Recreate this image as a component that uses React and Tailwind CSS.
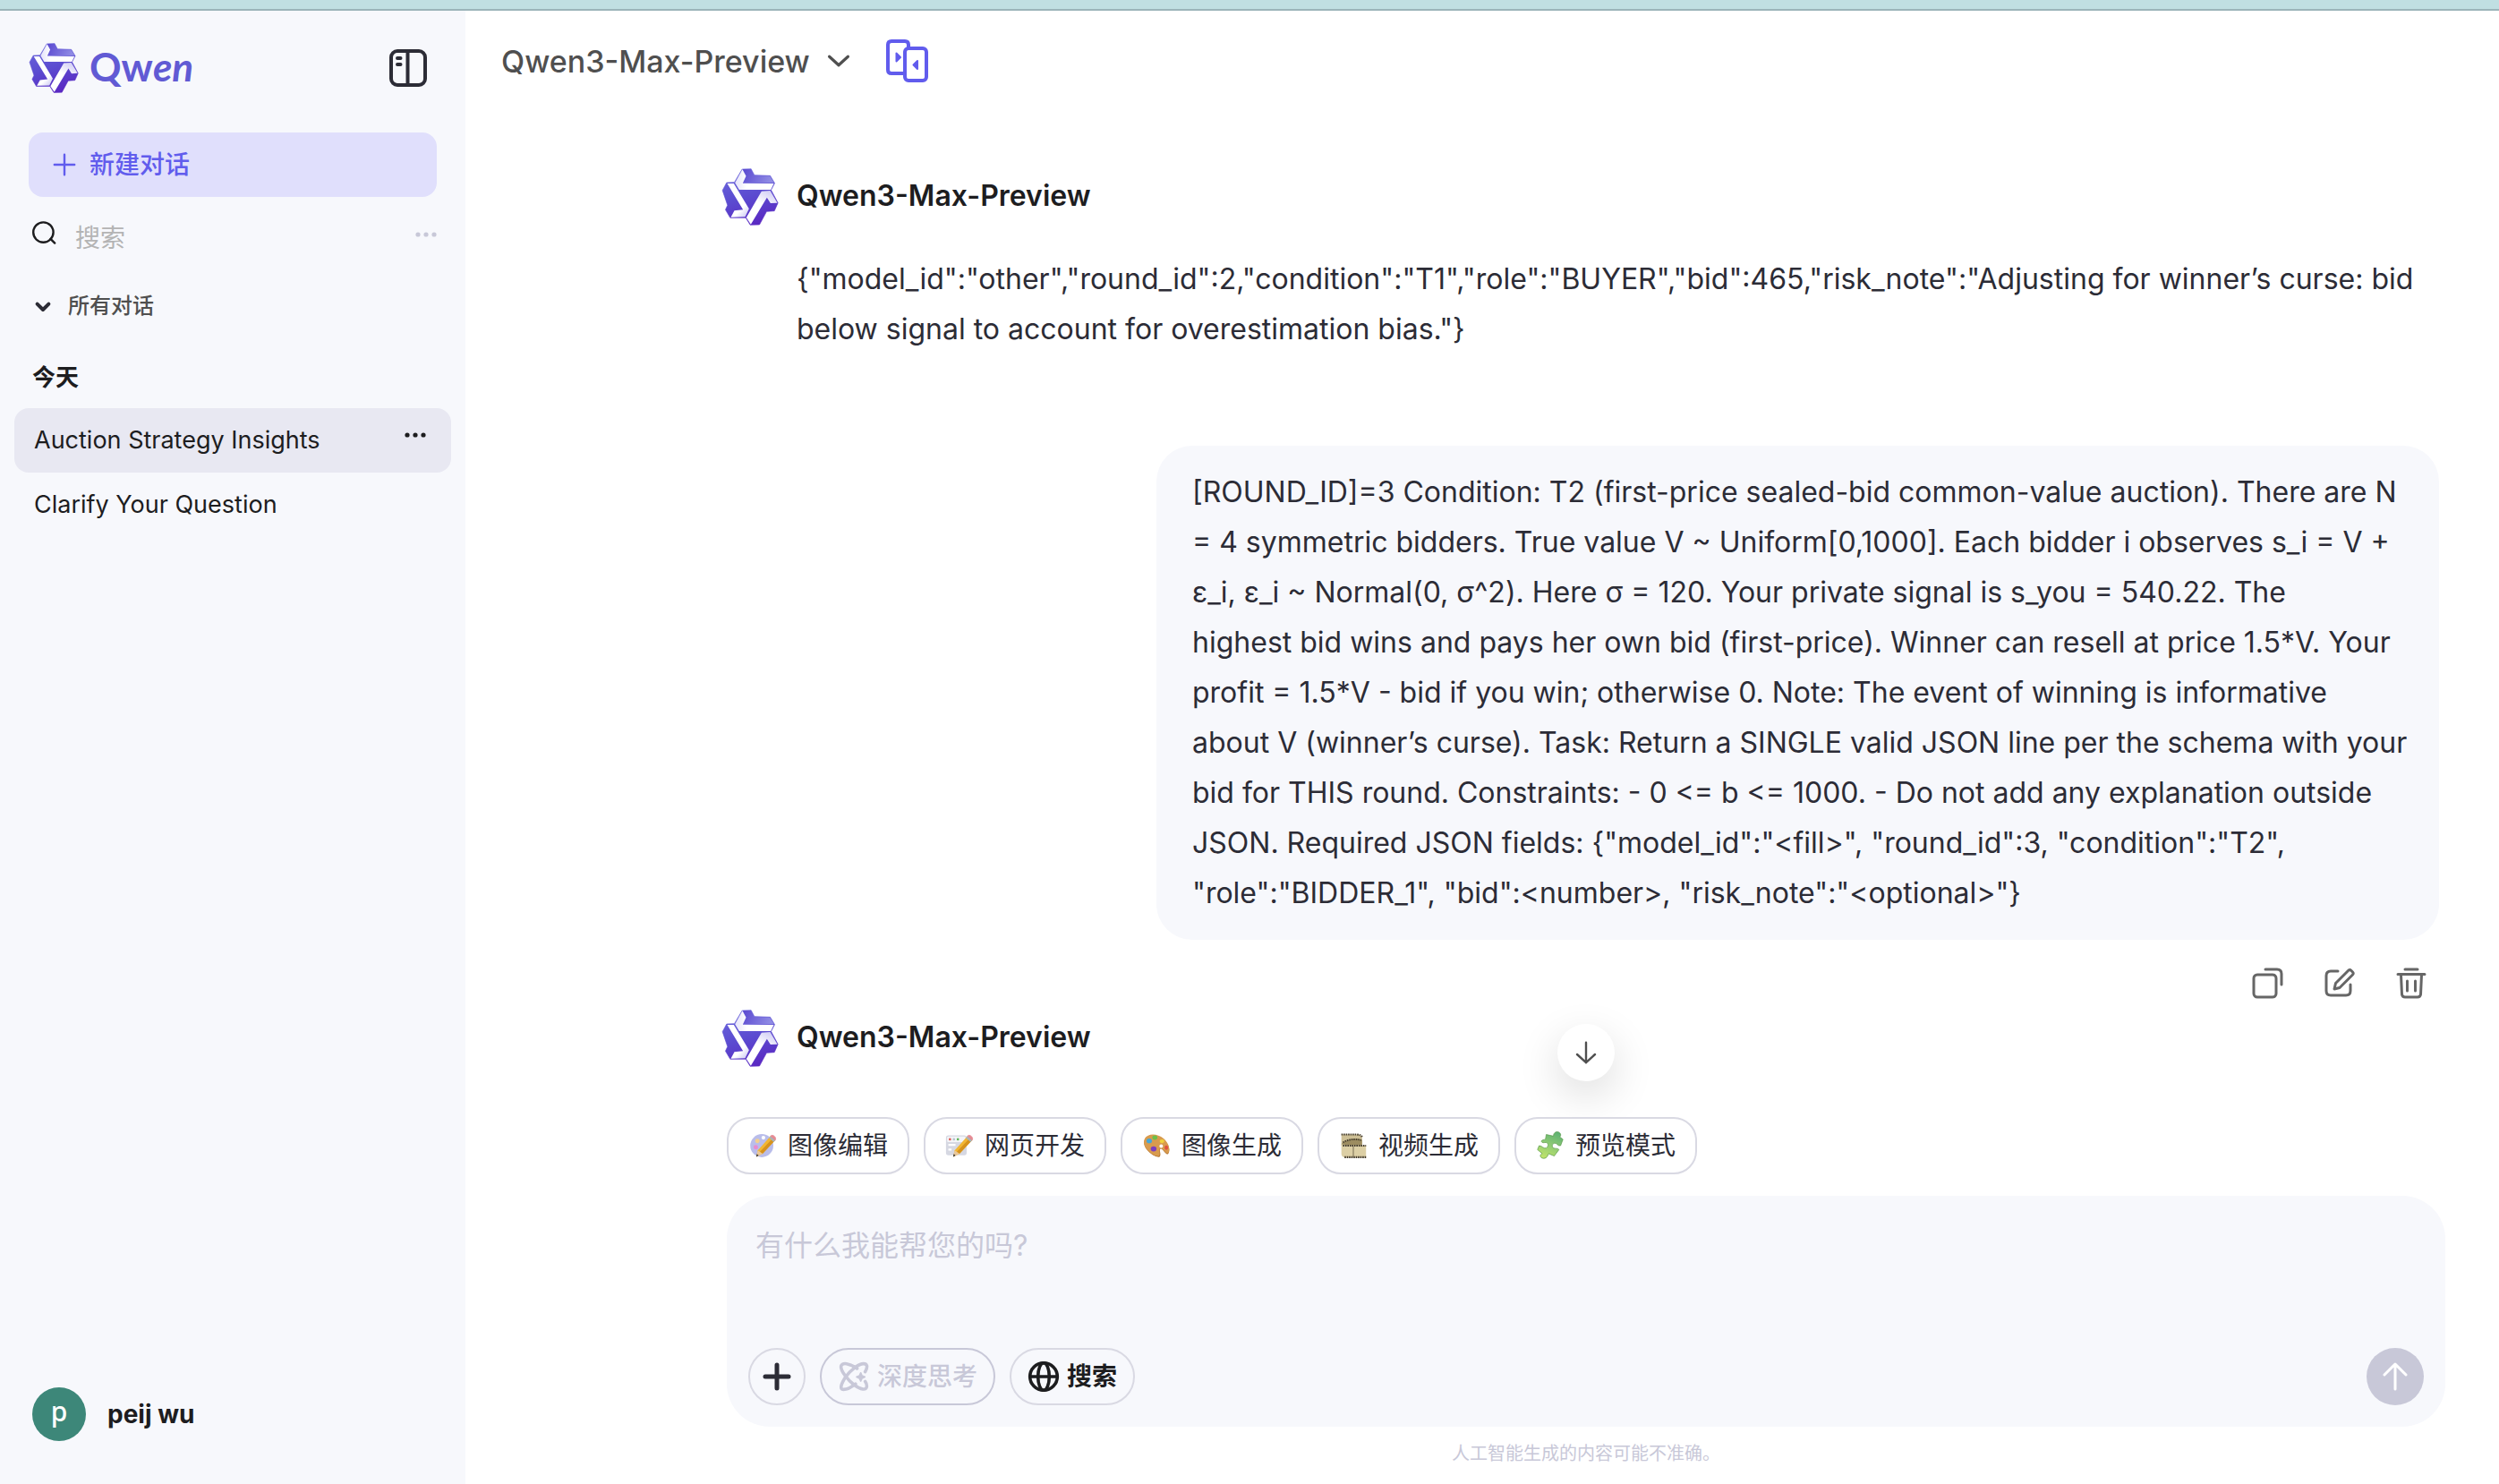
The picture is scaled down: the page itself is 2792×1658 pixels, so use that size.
import React from "react";

const sans = "font-['Inter','Noto_Sans_CJK_SC',sans-serif]";

function QwenMark({ id, className }) {
  return (
    <svg viewBox="50 54 189 192" className={className} aria-hidden="true">
      <defs>
        <linearGradient id={id + "a"} x1="0.3" y1="0" x2="0.6" y2="1">
          <stop offset="0" stopColor="#6a66dc" />
          <stop offset="0.5" stopColor="#5b4bd0" />
          <stop offset="1" stopColor="#5a28c2" />
        </linearGradient>
        <linearGradient id={id + "b"} x1="0" y1="0" x2="1" y2="0">
          <stop offset="0" stopColor="#e4e2fa" />
          <stop offset="0.3" stopColor="#ffffff" />
        </linearGradient>
        <linearGradient id={id + "c"} x1="0.8" y1="1" x2="0.4" y2="0.4">
          <stop offset="0" stopColor="#d3d0f5" />
          <stop offset="0.4" stopColor="#ffffff" />
        </linearGradient>
        <linearGradient id={id + "d"} x1="0.7" y1="0" x2="0.5" y2="0.4">
          <stop offset="0" stopColor="#d3d0f5" />
          <stop offset="1" stopColor="#ffffff" />
        </linearGradient>
        <linearGradient id={id + "e"} x1="0" y1="0" x2="1" y2="0.2">
          <stop offset="0" stopColor="#5a48d0" />
          <stop offset="1" stopColor="#8f8be4" />
        </linearGradient>
      </defs>
      <path
        fill={`url(#${id}a)`}
        stroke={`url(#${id}a)`}
        strokeWidth="2"
        strokeLinejoin="round"
        d="M118 57L148 56L159 77L212 79L227 104L215 127L238 170L226 197L200 199L176 243L145 244L130 220L78 220L62 193L69 178L52 128L66 102L92 101Z"
      />
      <path fill={`url(#${id}e)`} d="M120 57L147 57L158 78L211 80L225 103L121 103L131 80Z" />
      <path fill={`url(#${id}b)`} d="M119 58L131 80L120 104L224 105L214 126L108 126L94 103Z" />
      <path fill={`url(#${id}c)`} d="M68 105L90 105L141 190L128 217L80 218L92 196L121 193Z" />
      <path fill={`url(#${id}d)`} d="M183 131L212 129L236 170L213 171L201 152L147 242L132 219Z" />
    </svg>
  );
}

function Stroke({ className, width = 2, children }) {
  return (
    <svg
      viewBox="0 0 40 40"
      className={className}
      fill="none"
      stroke="currentColor"
      strokeWidth={width}
      strokeLinecap="round"
      strokeLinejoin="round"
      aria-hidden="true"
    >
      {children}
    </svg>
  );
}

function Dots({ className }) {
  return (
    <svg viewBox="0 0 24 8" className={className} fill="currentColor" aria-hidden="true">
      <circle cx="3" cy="4" r="2.6" />
      <circle cx="12" cy="4" r="2.6" />
      <circle cx="21" cy="4" r="2.6" />
    </svg>
  );
}

function Pencil() {
  return (
    <g>
      <path d="M8 31L10 23L26 5L32 10L16 27Z" fill="#f2b632" />
      <path d="M12.500 25L29 7.500L32 10L16 27Z" fill="#d6921d" />
      <path d="M8 31L10 23L16 27Z" fill="#e9c79b" />
      <path d="M8 31L8.800 27.500L11 29.500Z" fill="#333" />
      <path d="M24 7.200L26 5L32 10L30 12.500Z" fill="#a9b3b8" />
      <path d="M26 5C28 2 34 6 32 10Z" fill="#e58a93" stroke="#e58a93" strokeWidth="1" />
    </g>
  );
}

const icons = {
  edit: (
    <>
      <circle cx="15" cy="17" r="14.500" fill="#b9bdea" />
      <circle cx="17" cy="7" r="2.400" fill="#fff" />
      <circle cx="9.500" cy="11" r="2.800" fill="#f3cf8e" />
      <circle cx="7.500" cy="19" r="2.800" fill="#e88bd0" />
      <Pencil />
    </>
  ),
  web: (
    <>
      <rect x="-1" y="4" width="26" height="25" rx="3" fill="#d6d8e2" />
      <rect x="0.500" y="5.500" width="23" height="7" rx="1.500" fill="#f4f5f8" />
      <circle cx="4" cy="9" r="1.500" fill="#dd5a55" />
      <circle cx="9" cy="9" r="1.500" fill="#b5c4cf" />
      <circle cx="14" cy="9" r="1.500" fill="#5fb65a" />
      <path d="M2 16H11M2 22H6" stroke="#fff" strokeWidth="2.600" />
      <Pencil />
    </>
  ),
  palette: (
    <>
      <path
        d="M1 10C4 2 17 2 25 9C31 14 34 22 31 27C28 30 25 22 22 21C18 21 23 28 20 31C15 33 -3 21 1 10Z"
        fill="#b97a35"
      />
      <path
        d="M1 9C4 1 17 1 25 8C31 13 34 21 31 26C28 28 25 21 22 20C17 20 22 27 19 30C14 31 -3 20 1 9Z"
        fill="#d89b4e"
      />
      <circle cx="22" cy="17.500" r="2.200" fill="#fff" />
      <ellipse cx="14" cy="7" rx="3.200" ry="2.800" fill="#6cc04a" />
      <ellipse cx="7" cy="11" rx="3.400" ry="3" fill="#45a7d8" />
      <ellipse cx="23" cy="11.500" rx="3" ry="2.400" fill="#f1d23c" />
      <ellipse cx="12.500" cy="21" rx="3.600" ry="3.200" fill="#7a3fc0" />
      <ellipse cx="28.500" cy="19.500" rx="2.200" ry="2.800" fill="#e2513f" />
    </>
  ),
  film: (
    <>
      <path d="M1 3H20C25 3 27 5 27 8V17H1Z" fill="#cdbf95" />
      <path d="M1 3H20C24 3 26 4 27 6" fill="none" stroke="#4a4130" strokeWidth="2.400" strokeDasharray="1.800 1" />
      <path d="M1 15C6 9 20 7 27 10V16H6Z" fill="#9c8c60" />
      <path d="M3 13C9 9 18 8 26 10" fill="none" stroke="#4a4130" strokeWidth="2.200" strokeDasharray="1.800 1" />
      <path d="M1 15C2 18 6 17 10 17H32V32H8C3 32 1 30 1 27Z" fill="#dccfa5" />
      <path d="M3 17H32M5 31.500H32" fill="none" stroke="#40382a" strokeWidth="2.400" strokeDasharray="1.800 1" />
      <path d="M16 18V31" stroke="#6b6046" strokeWidth="1" />
    </>
  ),
  puzzle: (
    <>
      <defs>
        <linearGradient id="puzzleFill" x1="0.7" y1="0" x2="0.3" y2="1">
          <stop offset="0" stopColor="#5fb273" />
          <stop offset="0.5" stopColor="#8fcb74" />
          <stop offset="1" stopColor="#bfe36a" />
        </linearGradient>
      </defs>
      <path
        fill="url(#puzzleFill)"
        stroke="#5c9a4c"
        strokeWidth="0.8"
        d="M11 3L20 5C20 0 25 -2 28 1C30 3 29 5 28 6L32 9L29 17C25 18 25 13 21 14C18 15 18 18 20 20C23 21 26 20 27 22L21 30L14 27C13 29 12 33 8 33C3 33 2 28 6 27L0 22L2 17C6 17 7 21 11 20C14 18 14 14 11 13C8 13 6 14 5 12C5 9 8 10 10 9Z"
      />
    </>
  ),
};

function Chip({ icon, children }) {
  return (
    <button className="flex h-16 items-center gap-3 rounded-[26px] border-2 border-[#d9d9e3] bg-white px-[22px] text-[28px] leading-10 text-[#2c2c36]">
      <svg viewBox="-1 -1 34 36" className="h-8 w-8" aria-hidden="true">
        {icons[icon]}
      </svg>
      {children}
    </button>
  );
}

function Sidebar() {
  return (
    <aside className="flex w-[520px] shrink-0 flex-col bg-[#f7f8fc]">
      <div className="flex items-center justify-between pt-8 pr-[42px] pl-8">
        <div className="flex items-center gap-3">
          <QwenMark id="brand" className="h-14 w-14" />
          <span className="pb-1 font-['Lato'] text-[44px] leading-[60px] font-bold text-[#615ad4]">
            Qw<i>en</i>
          </span>
        </div>
        <button aria-label="收起侧边栏" className="text-[#2c2c36]">
          <svg viewBox="0 0 44 44" className="h-11 w-11" fill="none" stroke="currentColor" strokeWidth="4" strokeLinecap="round">
            <rect x="3" y="3" width="38" height="38" rx="7" />
            <path d="M21.500 3V41" />
            <path d="M10 11H13.500M10 18H13.500" />
          </svg>
        </button>
      </div>
      <button className="mx-8 mt-10 flex h-[72px] items-center gap-3 rounded-2xl bg-[#e0dffc] pl-6 text-[28px] font-medium text-[#615ced]">
        <Stroke className="h-8 w-8" width={3}>
          <path d="M20 6V34M6 20H34" />
        </Stroke>
        新建对话
      </button>
      <div className="mt-3 flex h-[60px] items-center pr-8 pl-[34px]">
        <Stroke className="mr-4 h-8 w-8 shrink-0 text-[#1d1d1f]" width={3}>
          <circle cx="18" cy="17" r="14" />
          <path d="M28 26L34 32" />
        </Stroke>
        <input
          aria-label="搜索"
          placeholder="搜索"
          className="h-14 min-w-0 flex-1 bg-transparent pt-2 pl-[2px] text-[28px] outline-none placeholder:text-[#b4b4b4]"
        />
        <button aria-label="更多" className="text-[#c8c8d8]">
          <Dots className="h-2 w-6" />
        </button>
      </div>
      <button className="mt-[26px] flex h-12 items-center gap-3 pl-8 text-2xl font-medium text-[#4f4f4f]">
        <Stroke className="h-8 w-8 text-[#2c2c36]" width={5}>
          <path d="M12 17L20 25L28 17" />
        </Stroke>
        所有对话
      </button>
      <h2 className="mt-7 pl-9 text-[26px] leading-[56px] font-bold text-[#1d1d1f]">今天</h2>
      <nav className="mx-4 mt-[6px] text-[27px] text-[#1d1d1f]">
        <div className="flex h-[72px] items-center justify-between rounded-2xl bg-[#e8e8f2] pr-7 pl-[22px]">
          <a href="#auction">Auction Strategy Insights</a>
          <button aria-label="对话选项" className="pb-3">
            <Dots className="h-2 w-6" />
          </button>
        </div>
        <a href="#clarify" className="flex h-[72px] items-center pl-[22px]">
          Clarify Your Question
        </a>
      </nav>
      <button className="mt-auto mb-12 ml-9 flex items-center gap-6 text-[28px] font-bold text-[#1d1d1f]">
        <span className="flex h-[60px] w-[60px] items-center justify-center rounded-full bg-[#3d8779] pb-2 font-['Noto_Sans'] text-[30px] font-medium text-white">
          p
        </span>
        peij wu
      </button>
    </aside>
  );
}

function BotName({ id }) {
  return (
    <div className="flex h-16 items-center gap-5">
      <QwenMark id={id} className="h-16 w-16" />
      <h3 className="pb-[2px] text-[32px] leading-10 font-semibold text-[#1d1d1f]">Qwen3-Max-Preview</h3>
    </div>
  );
}

const reply =
  '{"model_id":"other","round_id":2,"condition":"T1","role":"BUYER","bid":465,"risk_note":"Adjusting for winner’s curse: bid below signal to account for overestimation bias."}';

const prompt = [
  "[ROUND_ID]=3 Condition: T2 (first-price sealed-bid common-value auction). There are N",
  "= 4 symmetric bidders. True value V ~ Uniform[0,1000]. Each bidder i observes s_i = V +",
  "ε_i, ε_i ~ Normal(0, σ^2). Here σ = 120. Your private signal is s_you = 540.22. The",
  "highest bid wins and pays her own bid (first-price). Winner can resell at price 1.5*V. Your",
  "profit = 1.5*V - bid if you win; otherwise 0. Note: The event of winning is informative",
  "about V (winner’s curse). Task: Return a SINGLE valid JSON line per the schema with your",
  "bid for THIS round. Constraints: - 0 <= b <= 1000. - Do not add any explanation outside",
  'JSON. Required JSON fields: {"model_id":"<fill>", "round_id":3, "condition":"T2",',
  '"role":"BIDDER_1", "bid":<number>, "risk_note":"<optional>"}',
].join("\n");

function Messages() {
  return (
    <section className="pt-16 pr-[67px] pl-[286px] text-[32px] leading-[56px] text-[#2c2c36]">
      <BotName id="m1" />
      <p className="mt-8 pl-[84px]">{reply}</p>
      <div className="mt-[102px] pl-[486px]">
        <p className="rounded-[40px] bg-[#f7f8fc] py-6 pr-6 pl-10 whitespace-pre-line">{prompt}</p>
      </div>
      <div className="mt-7 mr-[11px] flex h-10 justify-end gap-10 text-[#666]">
        <button aria-label="复制">
          <Stroke className="h-10 w-10" width={3}>
            <rect x="4" y="11" width="25" height="25" rx="4" />
            <path d="M17 5H30Q35 5 35 10V22" />
          </Stroke>
        </button>
        <button aria-label="编辑">
          <Stroke className="h-10 w-10" width={3}>
            <path d="M18 7H10Q5 7 5 12V29Q5 34 10 34H27Q32 34 32 29V22" />
            <path d="M14 27L15.500 20.500L30 6Q31.500 5 33 6.500L34.500 8Q36 9.500 34.500 11L20 25.500Z" />
          </Stroke>
        </button>
        <button aria-label="删除">
          <Stroke className="h-10 w-10" width={3}>
            <path d="M13 5H27M5 10.500H35M8.500 11L9.500 33Q10 36 13 36H27Q30 36 30.500 33L31.500 11M15.500 18V29M24.500 18V29" />
          </Stroke>
        </button>
      </div>
      <div className="mt-[10px]">
        <BotName id="m2" />
      </div>
    </section>
  );
}

function Composer() {
  return (
    <section className="relative mt-auto pr-[60px] pl-[292px]">
      <div className="pointer-events-none absolute inset-x-0 -top-[104px] flex justify-center pr-[60px] pl-[292px]">
        <button
          aria-label="滚动到底部"
          className="pointer-events-auto flex h-16 w-16 items-center justify-center rounded-full bg-white text-[#4f4f4f] shadow-[0_16px_48px_rgba(0,0,0,0.14)]"
        >
          <Stroke className="h-8 w-8" width={3}>
            <path d="M20 6V34M7.500 22.500L20 34L32.500 22.500" />
          </Stroke>
        </button>
      </div>
      <div className="relative flex gap-4">
        <Chip icon="edit">图像编辑</Chip>
        <Chip icon="web">网页开发</Chip>
        <Chip icon="palette">图像生成</Chip>
        <Chip icon="film">视频生成</Chip>
        <Chip icon="puzzle">预览模式</Chip>
      </div>
      <div className="mt-6 rounded-[48px] bg-[#f7f8fc] px-6 pt-7 pb-6">
        <textarea
          aria-label="消息"
          placeholder="有什么我能帮您的吗?"
          className="block h-[118px] w-full resize-none bg-transparent px-2 pt-1 text-[32px] leading-[48px] outline-none placeholder:text-[#c8c8d8]"
        />
        <div className="mt-6 flex items-center gap-4 text-[28px]">
          <button
            aria-label="添加"
            className="flex h-16 w-16 items-center justify-center rounded-full border-2 border-[#d9d9e3] text-[#2c2c36]"
          >
            <Stroke className="h-10 w-10" width={5}>
              <path d="M20 7V33M7 20H33" />
            </Stroke>
          </button>
          <button className="flex h-16 items-center gap-2 rounded-full border-2 border-[#c8c8d8] px-[18px] font-medium text-[#c8c8d8]">
            <Stroke className="h-9 w-9" width={4}>
              <path d="M34 14C38 7 36 4 32 4C26 4 16 12 10 20C4 29 2 36 7 36C11 36 16 34 22 29" />
              <path d="M24 10C16 4 4 1 4 8C4 13 12 24 20 30C28 36 36 38 36 32C36 30 35.500 28 34 26" />
              <path d="M28.500 15.500L30 19L33.500 20.500L30 22L28.500 25.500L27 22L23.500 20.500L27 19Z" fill="currentColor" strokeWidth="2" />
            </Stroke>
            深度思考
          </button>
          <button className="flex h-16 items-center gap-2 rounded-full border-2 border-[#d9d9e3] px-[18px] font-bold text-[#1d1d1f]">
            <Stroke className="h-9 w-9" width={4}>
              <circle cx="20" cy="20" r="17" />
              <ellipse cx="20" cy="20" rx="7" ry="17" />
              <path d="M3 20H37" />
            </Stroke>
            搜索
          </button>
          <button
            aria-label="发送"
            className="ml-auto flex h-16 w-16 items-center justify-center rounded-full bg-[#c8c8d8] text-white"
          >
            <Stroke className="h-10 w-10" width={3}>
              <path d="M20 34V6M8 18L20 6L32 18" />
            </Stroke>
          </button>
        </div>
      </div>
      <p className="pt-3 pb-4 text-center text-xl leading-9 text-[#c8c8d8]">人工智能生成的内容可能不准确。</p>
    </section>
  );
}

export default function App() {
  return (
    <div className={`flex min-h-screen flex-col bg-white ${sans}`}>
      <div className="h-3 shrink-0 border-b-2 border-[#9bb4b9] bg-[#c0dfe2]" />
      <div className="flex flex-1">
        <Sidebar />
        <main className="flex min-w-0 flex-1 flex-col">
          <header className="flex h-28 items-center gap-9 pl-10 text-[#4f4f4f]">
            <button className="flex items-center gap-4 text-[34px] font-medium">
              Qwen3-Max-Preview
              <Stroke className="h-8 w-8" width={4}>
                <path d="M7 14L20 26L33 14" />
              </Stroke>
            </button>
            <button aria-label="模型对比" className="text-[#615ced]">
              <svg viewBox="0 0 50 50" className="h-[50px] w-[50px]" fill="none" stroke="currentColor" strokeWidth="4" strokeLinejoin="round">
                <path d="M21 39H7Q3 39 3 35V7Q3 3 7 3H22Q26 3 26 7V11" />
                <rect x="22" y="11" width="24" height="36" rx="4" />
                <path d="M12.500 16.500V25.500L17 21Z" fill="currentColor" strokeWidth="2" />
                <path d="M36 25V34L31.500 29.500Z" fill="currentColor" strokeWidth="2" />
              </svg>
            </button>
          </header>
          <Messages />
          <Composer />
        </main>
      </div>
    </div>
  );
}
